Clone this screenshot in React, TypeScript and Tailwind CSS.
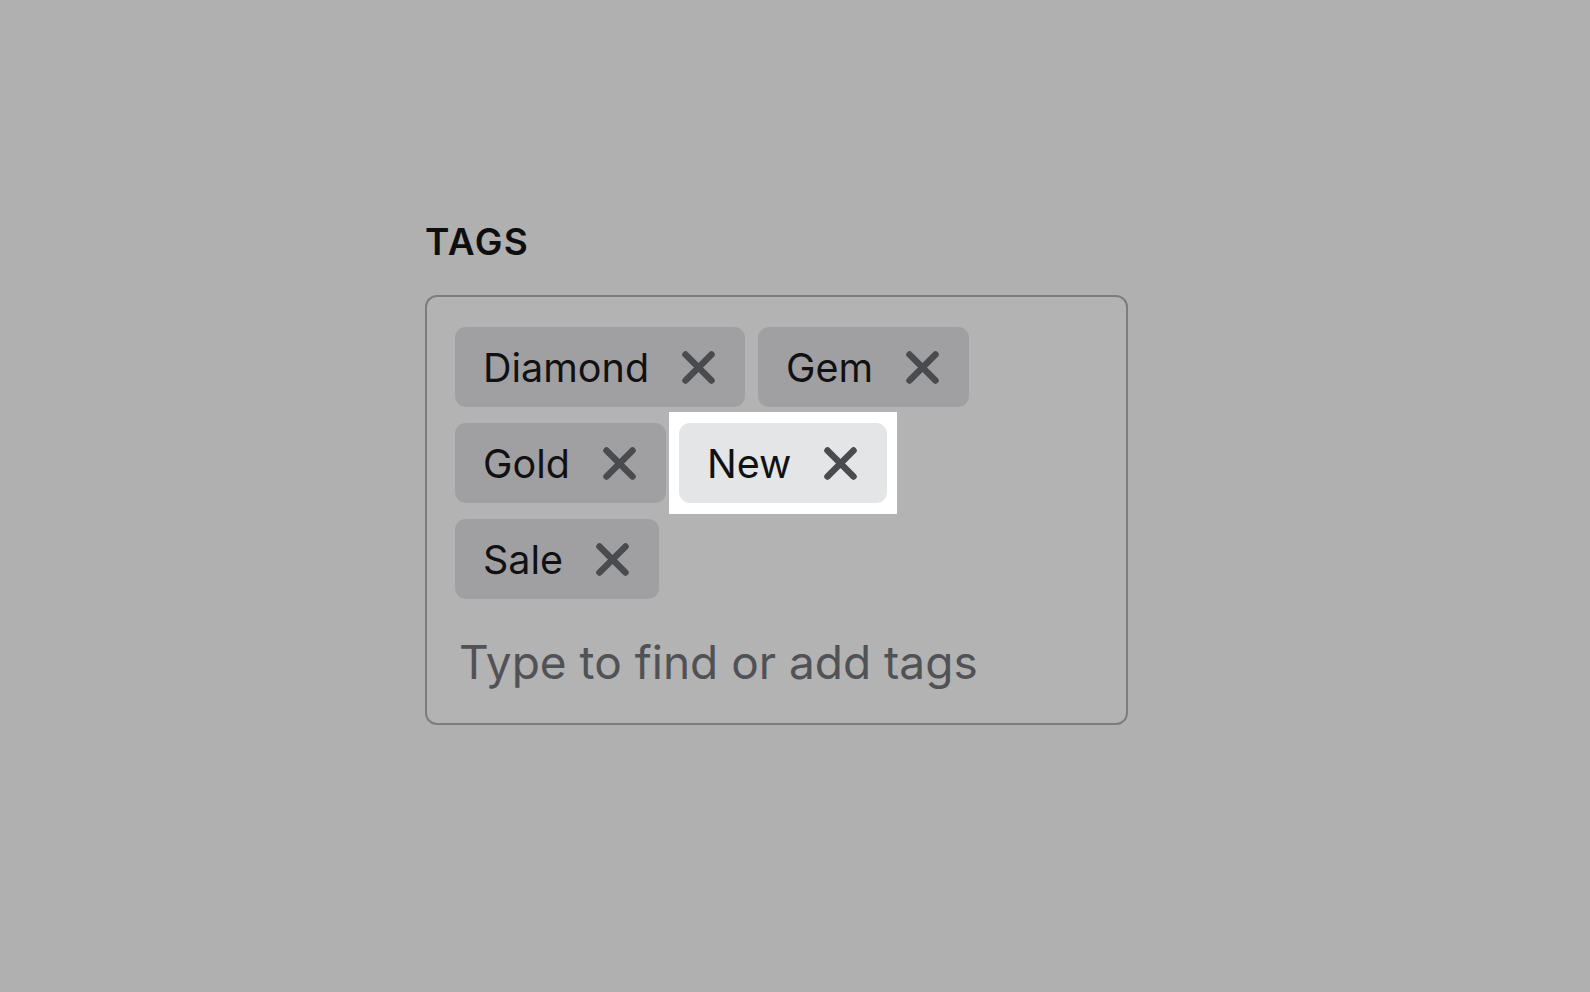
import { useState } from "react";

const CloseIcon = () => (
  <svg width="33" height="33" viewBox="0 0 33 33" fill="none" className="shrink-0">
    <path
      d="M3.5 3.5L29.5 29.5M29.5 3.5L3.5 29.5"
      stroke="#4a4b4e"
      strokeWidth="6.5"
      strokeLinecap="round"
    />
  </svg>
);

const Tag = ({ label, active }: { label: string; active?: boolean }) => (
  <span
    className={
      "flex h-[80px] items-center gap-[33px] rounded-[11px] pl-[28px] pr-[30px] text-[39.5px] text-[#111113] " +
      (active ? "bg-[#e4e5e7]" : "bg-[#a0a0a2]")
    }
  >
    <span className="pt-[3px] leading-none">{label}</span>
    <CloseIcon />
  </span>
);

export default function App() {
  const [tags] = useState(["Diamond", "Gem", "Gold", "New", "Sale"]);

  return (
    <div className="min-h-screen bg-[#afb0af] pl-[425px] pt-[220px] font-['Inter',sans-serif]">
      <div className="w-[703px]">
        <div className="mb-[31px] h-[44px] text-[37px] font-semibold leading-[44px] tracking-[1.5px] text-[#0e0e0e]">
          TAGS
        </div>
        <div className="h-[430px] rounded-[12px] border-2 border-[#7b7d7e] bg-[#b3b3b3] pl-[28px] pr-[28px] pt-[30px]">
          <div className="flex flex-wrap gap-x-[13px] gap-y-[16px]">
            {tags.map((tag) =>
              tag === "New" ? (
                <span key={tag} className="-mx-[10px] -my-[11px] bg-white px-[10px] py-[11px]">
                  <Tag label={tag} active />
                </span>
              ) : (
                <Tag key={tag} label={tag} />
              )
            )}
          </div>
          <input
            className="mt-[35px] ml-[4px] h-[56px] w-[600px] bg-transparent text-[46px] leading-[56px] text-[#505256] outline-none placeholder:text-[#505256]"
            placeholder="Type to find or add tags"
          />
        </div>
      </div>
    </div>
  );
}
